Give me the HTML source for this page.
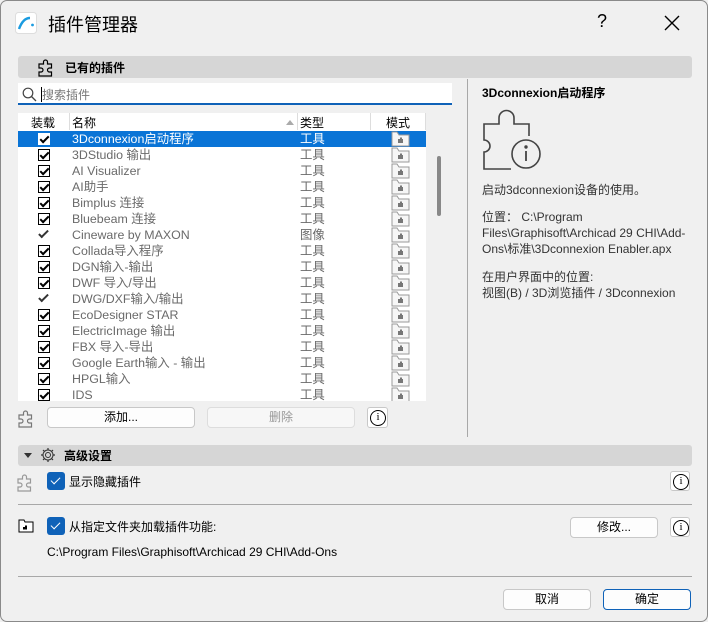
<!DOCTYPE html>
<html><head><meta charset="utf-8"><style>
*{box-sizing:border-box;margin:0;padding:0}
body{width:708px;height:622px;background:#f0f0f0;font-family:"Liberation Sans","Noto Sans CJK SC",sans-serif;font-size:12px;color:#000;position:relative;overflow:hidden}
.win{position:absolute;left:0;top:0;width:708px;height:622px;border:1px solid #8a8a8a;border-radius:7px;background:#f0f0f0}
.abs{position:absolute}
.bar{position:absolute;background:#d6d6d6;border-radius:3px}
.row{position:absolute;left:17px;width:408px;height:16px;font-size:12.4px;line-height:16px}
.row .nm{position:absolute;left:54px;color:#6a6a6a}
.row .tp{position:absolute;left:282px;color:#6a6a6a}
.cb{position:absolute;left:20px;top:2px;width:12px;height:12px;border:1px solid #000;background:#fff}
.cb:after{content:"";position:absolute;left:3px;top:0px;width:3px;height:7px;border:solid #000;border-width:0 2px 2px 0;transform:rotate(45deg)}
.ck{position:absolute;left:23px;top:1px;width:5px;height:10px;border:solid #333;border-width:0 2px 2px 0;transform:rotate(45deg)}
.md{position:absolute;left:373px;top:0px;width:19px;height:16px}
.btn{position:absolute;background:#fdfdfd;border:1px solid #c8c8c8;border-radius:4px;text-align:center;font-size:12px}
.info{position:absolute;width:20px;height:20px;border:1px solid #c8c8c8;border-radius:3px;background:#fff}
.info:after{content:"i";position:absolute;left:2px;top:2px;width:14px;height:14px;border:1.3px solid #000;border-radius:50%;font-size:11px;line-height:12px;text-align:center;font-family:"Liberation Serif",serif}
.bcb{position:absolute;width:18px;height:18px;background:#0f62b8;border-radius:3px}
.bcb:after{content:"";position:absolute;left:6px;top:3px;width:4px;height:8px;border:solid #fff;border-width:0 1.3px 1.3px 0;transform:rotate(45deg)}
.hl{position:absolute;height:1px;background:#a8a8a8}
</style></head><body><div class="win">
<svg width="0" height="0" style="position:absolute"><defs>
<symbol id="fold" viewBox="0 0 19 16"><path d="M1 1h5l2 3h10v11H1z" fill="#f6f6f6" stroke="#999"/><path d="M7 8h2v-1.5h2v1.5h1v4H7z" fill="#777"/></symbol>
<symbol id="pz" viewBox="0 0 20 20"><path d="M2 7h4.5v-2a2 2 0 0 1 4 0v2h4v4h-2a2 2 0 0 0 0 4h2v4H2v-4h2a2 2 0 0 0 0-4H2z" fill="none" stroke="currentColor" stroke-width="1.2"/></symbol>
</defs></svg>
<svg class="abs" style="left:14px;top:11px" width="22" height="22" viewBox="0 0 22 22"><rect x="0.5" y="0.5" width="21" height="21" rx="3" fill="#fff" stroke="#ddd"/><path d="M4 17 Q8 6 15 6" stroke="#1a9be0" stroke-width="2.4" fill="none"/><circle cx="17.5" cy="13" r="1.4" fill="#1a9be0"/></svg>
<div class="abs" style="left:47px;top:10px;font-size:18px">插件管理器</div>
<div class="abs" style="left:596px;top:10px;font-size:18px">?</div>
<svg class="abs" style="left:663px;top:14px" width="16" height="16"><path d="M1 1L15 15M15 1L1 15" stroke="#000" stroke-width="1.4"/></svg>

<div class="bar" style="left:17px;top:55px;width:674px;height:22px"></div>
<svg class="abs" style="left:36px;top:56px;color:#000" width="20" height="20"><use href="#pz"/></svg>
<div class="abs" style="left:64px;top:58px;font-weight:bold">已有的插件</div>

<div class="abs" style="left:17px;top:82px;width:434px;height:22px;background:#fff;border-bottom:2px solid #0f62b8"></div>
<svg class="abs" style="left:21px;top:86px" width="15" height="15"><circle cx="6" cy="6" r="4.8" stroke="#444" fill="none" stroke-width="1.2"/><path d="M9.5 9.5L14 14" stroke="#444" stroke-width="1.3"/></svg>
<div class="abs" style="left:40px;top:86px;width:1px;height:15px;background:#000"></div>
<div class="abs" style="left:41px;top:85px;color:#777">搜索插件</div>

<div class="abs" style="left:17px;top:112px;width:408px;height:288px;background:#fff"></div>
<div class="abs" style="left:30px;top:113px">装载</div>
<div class="abs" style="left:68px;top:112px;width:1px;height:17px;background:#ddd"></div>
<div class="abs" style="left:71px;top:113px">名称</div>
<div class="abs" style="left:285px;top:119px;width:0;height:0;border:4px solid transparent;border-bottom:5px solid #aaa;border-top:0"></div>
<div class="abs" style="left:296px;top:112px;width:1px;height:17px;background:#ddd"></div>
<div class="abs" style="left:299px;top:113px">类型</div>
<div class="abs" style="left:369px;top:112px;width:1px;height:17px;background:#ddd"></div>
<div class="abs" style="left:385px;top:113px">模式</div>
<div class="abs" style="left:424px;top:112px;width:1px;height:17px;background:#ddd"></div>

<div class="row" style="top:130px;background:#0a74d6"><div class="cb" style="border-color:#fff"></div><span class="nm" style="color:#fff">3Dconnexion启动程序</span><span class="tp" style="color:#fff">工具</span><svg class="md"><use href="#fold"/></svg></div>
<div class="row" style="top:146px"><div class="cb"></div><span class="nm">3DStudio 输出</span><span class="tp">工具</span><svg class="md"><use href="#fold"/></svg></div>
<div class="row" style="top:162px"><div class="cb"></div><span class="nm">AI Visualizer</span><span class="tp">工具</span><svg class="md"><use href="#fold"/></svg></div>
<div class="row" style="top:178px"><div class="cb"></div><span class="nm">AI助手</span><span class="tp">工具</span><svg class="md"><use href="#fold"/></svg></div>
<div class="row" style="top:194px"><div class="cb"></div><span class="nm">Bimplus 连接</span><span class="tp">工具</span><svg class="md"><use href="#fold"/></svg></div>
<div class="row" style="top:210px"><div class="cb"></div><span class="nm">Bluebeam 连接</span><span class="tp">工具</span><svg class="md"><use href="#fold"/></svg></div>
<div class="row" style="top:226px"><div class="ck"></div><span class="nm">Cineware by MAXON</span><span class="tp">图像</span><svg class="md"><use href="#fold"/></svg></div>
<div class="row" style="top:242px"><div class="cb"></div><span class="nm">Collada导入程序</span><span class="tp">工具</span><svg class="md"><use href="#fold"/></svg></div>
<div class="row" style="top:258px"><div class="cb"></div><span class="nm">DGN输入-输出</span><span class="tp">工具</span><svg class="md"><use href="#fold"/></svg></div>
<div class="row" style="top:274px"><div class="cb"></div><span class="nm">DWF 导入/导出</span><span class="tp">工具</span><svg class="md"><use href="#fold"/></svg></div>
<div class="row" style="top:290px"><div class="ck"></div><span class="nm">DWG/DXF输入/输出</span><span class="tp">工具</span><svg class="md"><use href="#fold"/></svg></div>
<div class="row" style="top:306px"><div class="cb"></div><span class="nm">EcoDesigner STAR</span><span class="tp">工具</span><svg class="md"><use href="#fold"/></svg></div>
<div class="row" style="top:322px"><div class="cb"></div><span class="nm">ElectricImage 输出</span><span class="tp">工具</span><svg class="md"><use href="#fold"/></svg></div>
<div class="row" style="top:338px"><div class="cb"></div><span class="nm">FBX 导入-导出</span><span class="tp">工具</span><svg class="md"><use href="#fold"/></svg></div>
<div class="row" style="top:354px"><div class="cb"></div><span class="nm">Google Earth输入 - 输出</span><span class="tp">工具</span><svg class="md"><use href="#fold"/></svg></div>
<div class="row" style="top:370px"><div class="cb"></div><span class="nm">HPGL输入</span><span class="tp">工具</span><svg class="md"><use href="#fold"/></svg></div>
<div class="row" style="top:386px;height:14px;overflow:hidden"><div class="cb"></div><span class="nm">IDS</span><span class="tp">工具</span><svg class="md"><use href="#fold"/></svg></div>
<div class="abs" style="left:436px;top:155px;width:4px;height:60px;background:#888;border-radius:2px"></div>

<svg class="abs" style="left:16px;top:407px;color:#777" width="20" height="20"><use href="#pz"/></svg>
<div class="btn" style="left:46px;top:406px;width:148px;height:21px;line-height:19px">添加...</div>
<div class="btn" style="left:206px;top:406px;width:148px;height:21px;line-height:19px;background:#f7f7f7;color:#999;border-color:#ddd">删除</div>
<div class="info" style="left:366px;top:406px;width:21px;height:21px"></div>

<div class="abs" style="left:466px;top:78px;width:1px;height:358px;background:#a8a8a8"></div>
<div class="abs" style="left:481px;top:83px;font-weight:bold">3Dconnexion启动程序</div>
<svg class="abs" style="left:480px;top:108px" width="62" height="64" viewBox="0 0 62 64"><path d="M30 60H3V43a6 6 0 0 0 0-12V15h15V9a7.5 7.5 0 0 1 15 0v6h15v12" fill="none" stroke="#444" stroke-width="1.6"/><circle cx="45" cy="45" r="14" fill="none" stroke="#444" stroke-width="1.6"/><circle cx="45" cy="38" r="1.7" fill="#444"/><path d="M45 42v10" stroke="#444" stroke-width="1.8"/></svg>
<div class="abs" style="left:481px;top:180px;color:#333">启动3dconnexion设备的使用。</div>
<div class="abs" style="left:481px;top:208px;color:#333;line-height:16px;width:220px">位置： C:\Program<br>Files\Graphisoft\Archicad 29 CHI\Add-<br>Ons\标准\3Dconnexion Enabler.apx</div>
<div class="abs" style="left:481px;top:268px;color:#333;line-height:16px">在用户界面中的位置:<br>视图(B) / 3D浏览插件 / 3Dconnexion</div>

<div class="bar" style="left:17px;top:444px;width:674px;height:21px"></div>
<div class="abs" style="left:23px;top:452px;border:4px solid transparent;border-top:5px solid #333;border-bottom:0"></div>
<svg class="abs" style="left:38px;top:445px" width="18" height="18" viewBox="0 0 18 18"><circle cx="9" cy="9" r="2.5" fill="none" stroke="#333"/><path d="M9 2v2M9 14v2M2 9h2M14 9h2M4 4l1.5 1.5M12.5 12.5L14 14M4 14l1.5-1.5M12.5 5.5L14 4" stroke="#333" stroke-width="1.2"/><circle cx="9" cy="9" r="5" fill="none" stroke="#333"/></svg>
<div class="abs" style="left:63px;top:446px;font-weight:bold">高级设置</div>

<svg class="abs" style="left:15px;top:471px;color:#999" width="20" height="20"><use href="#pz"/></svg>
<div class="bcb" style="left:46px;top:471px"></div>
<div class="abs" style="left:68px;top:472px">显示隐藏插件</div>
<div class="info" style="left:669px;top:470px"></div>
<div class="hl" style="left:17px;top:503px;width:674px"></div>

<svg class="abs" style="left:17px;top:517px" width="16" height="16" viewBox="0 0 16 16"><path d="M1 2h5l1 2h8v10H1z" fill="#fff" stroke="#000"/><path d="M5 9h2v-1.5h2v4H5z" fill="#000"/></svg>
<div class="bcb" style="left:46px;top:516px"></div>
<div class="abs" style="left:68px;top:517px">从指定文件夹加载插件功能:</div>
<div class="btn" style="left:569px;top:516px;width:88px;height:21px;line-height:19px">修改...</div>
<div class="info" style="left:669px;top:516px"></div>
<div class="abs" style="left:46px;top:544px">C:\Program Files\Graphisoft\Archicad 29 CHI\Add-Ons</div>
<div class="hl" style="left:17px;top:575px;width:674px"></div>

<div class="btn" style="left:502px;top:588px;width:88px;height:21px;line-height:19px">取消</div>
<div class="btn" style="left:602px;top:588px;width:88px;height:21px;line-height:19px;border-color:#0f62b8">确定</div>
</div></body></html>
